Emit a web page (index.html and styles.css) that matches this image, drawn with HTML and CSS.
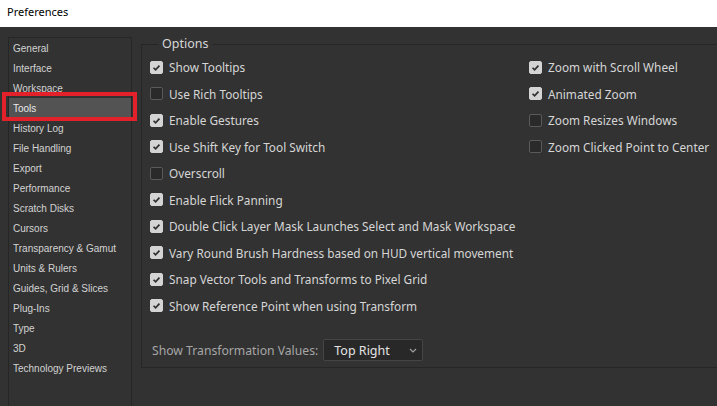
FILE: index.html
```html
<!DOCTYPE html>
<html lang="en">
<head>
  <meta charset="UTF-8" />
  <title>Preferences</title>
  <link rel="stylesheet" href="styles.css">
</head>
<body>
  <div class="titlebar">Preferences</div>

  <div class="dialog">
    <ul class="nav">
      <li>General</li>
      <li>Interface</li>
      <li>Workspace</li>
      <li class="active">Tools</li>
      <li>History Log</li>
      <li>File Handling</li>
      <li>Export</li>
      <li>Performance</li>
      <li>Scratch Disks</li>
      <li>Cursors</li>
      <li>Transparency &amp; Gamut</li>
      <li>Units &amp; Rulers</li>
      <li>Guides, Grid &amp; Slices</li>
      <li>Plug-Ins</li>
      <li>Type</li>
      <li>3D</li>
      <li>Technology Previews</li>
    </ul>

    <fieldset class="options">
      <legend>Options</legend>
      <div class="cols">
        <div class="col left">
          <label class="row"><span class="box on"><svg viewBox="0 0 13 13"><path d="M3 6.8 L5.4 9.2 L10 4.2" /></svg></span>Show Tooltips</label>
          <label class="row"><span class="box"></span>Use Rich Tooltips</label>
          <label class="row"><span class="box on"><svg viewBox="0 0 13 13"><path d="M3 6.8 L5.4 9.2 L10 4.2" /></svg></span>Enable Gestures</label>
          <label class="row"><span class="box on"><svg viewBox="0 0 13 13"><path d="M3 6.8 L5.4 9.2 L10 4.2" /></svg></span>Use Shift Key for Tool Switch</label>
          <label class="row"><span class="box"></span>Overscroll</label>
          <label class="row"><span class="box on"><svg viewBox="0 0 13 13"><path d="M3 6.8 L5.4 9.2 L10 4.2" /></svg></span>Enable Flick Panning</label>
          <label class="row"><span class="box on"><svg viewBox="0 0 13 13"><path d="M3 6.8 L5.4 9.2 L10 4.2" /></svg></span>Double Click Layer Mask Launches Select and Mask Workspace</label>
          <label class="row"><span class="box on"><svg viewBox="0 0 13 13"><path d="M3 6.8 L5.4 9.2 L10 4.2" /></svg></span>Vary Round Brush Hardness based on HUD vertical movement</label>
          <label class="row"><span class="box on"><svg viewBox="0 0 13 13"><path d="M3 6.8 L5.4 9.2 L10 4.2" /></svg></span>Snap Vector Tools and Transforms to Pixel Grid</label>
          <label class="row"><span class="box on"><svg viewBox="0 0 13 13"><path d="M3 6.8 L5.4 9.2 L10 4.2" /></svg></span>Show Reference Point when using Transform</label>
        </div>
        <div class="col right">
          <label class="row"><span class="box on"><svg viewBox="0 0 13 13"><path d="M3 6.8 L5.4 9.2 L10 4.2" /></svg></span>Zoom with Scroll Wheel</label>
          <label class="row"><span class="box on"><svg viewBox="0 0 13 13"><path d="M3 6.8 L5.4 9.2 L10 4.2" /></svg></span>Animated Zoom</label>
          <label class="row"><span class="box"></span>Zoom Resizes Windows</label>
          <label class="row"><span class="box"></span>Zoom Clicked Point to Center</label>
        </div>
      </div>

      <div class="transform">
        <span class="muted">Show Transformation Values:</span>
        <div class="select">
          <span>Top Right</span>
          <svg class="chev" viewBox="0 0 8 5"><path d="M1 1 L4 4 L7 1" /></svg>
        </div>
      </div>
    </fieldset>
  </div>
</body>
</html>
```

FILE: styles.css
```css
body {
  margin: 0;
  padding: 0;
  width: 717px;
  height: 406px;
  overflow: hidden;
  background-color: #323232;
  font-family: 'Noto Sans', 'Open Sans', sans-serif;
}

.titlebar {
  height: 27px;
  background-color: #fff;
  color: #000;
  font-size: 11px;
  line-height: 24px;
  padding-left: 7px;
  box-sizing: border-box;
}

.dialog {
  display: flex;
  align-items: flex-start;
  height: 379px;
}

/* category list */
.nav {
  position: relative;
  flex: none;
  list-style: none;
  margin: 10px 0 0 8px;
  padding: 0;
  width: 122px;
  height: 369px;
  border: 1px solid #262626;
  border-bottom: none;
  font-family: 'Liberation Sans', Arial, sans-serif;
  font-size: 10px;
  color: #d2d2d2;
}

.nav li {
  height: 20px;
  box-sizing: border-box;
  padding: 1px 0 0 4px;
  line-height: 19px;
  white-space: nowrap;
}

.nav li.active {
  position: relative;
  background-color: #535353;
  color: #e8e8e8;
}

.nav li.active::after {
  content: "";
  position: absolute;
  left: -7px;
  top: -6px;
  width: 127px;
  height: 21px;
  border: 4px solid #e3212b;
}

/* options group */
.options {
  flex: none;
  margin: 9px 0 0 9px;
  padding: 2px 0 6px 8px;
  width: 567px;
  border: 1px solid #262626;
  border-right: none;
  font-size: 11.8px;
  color: #d6d6d6;
}

.options legend {
  margin-left: 8px;
  padding: 0 4px;
  line-height: 16px;
  font-size: 12.5px;
  color: #d6d6d6;
}

.cols {
  display: flex;
}

.col.left {
  width: 379px;
}

.row {
  display: flex;
  align-items: center;
  height: 26.5px;
  white-space: nowrap;
}

.box {
  width: 13px;
  height: 13px;
  box-sizing: border-box;
  margin-right: 6px;
  border: 1px solid #5a5a5a;
  border-radius: 2px;
  background-color: #2a2a2a;
  flex: none;
}

.box.on {
  background-color: #d4d4d4;
  border-color: #d4d4d4;
}

.box svg {
  display: block;
  width: 11px;
  height: 11px;
}

.box svg path {
  fill: none;
  stroke: #2e2e2e;
  stroke-width: 2;
}

.transform {
  display: flex;
  align-items: center;
  margin-top: 20px;
  padding-left: 2px;
}

.muted {
  color: #a6a6a6;
  font-size: 12.2px;
  margin-right: 5px;
}

.select {
  display: flex;
  align-items: center;
  justify-content: space-between;
  width: 100px;
  height: 22px;
  box-sizing: border-box;
  padding: 0 5px 0 10px;
  border: 1px solid #454545;
  border-radius: 2px;
  background-color: #282828;
  color: #e4e4e4;
  font-size: 12.5px;
}

.chev {
  width: 8px;
  height: 5px;
}

.chev path {
  fill: none;
  stroke: #a0a0a0;
  stroke-width: 1.2;
}
```
